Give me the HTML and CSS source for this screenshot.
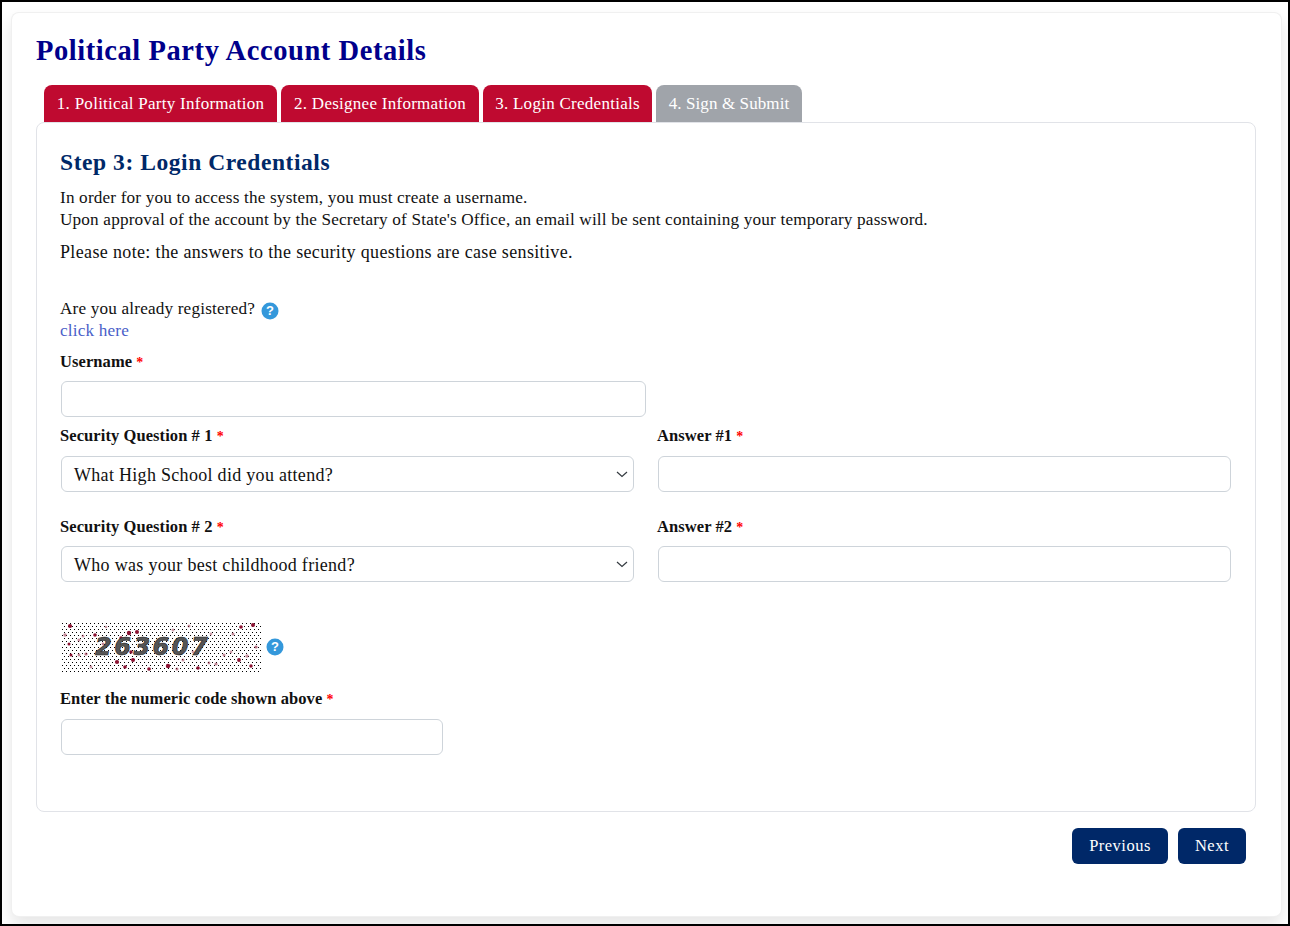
FILE: index.html
```html
<!DOCTYPE html>
<html lang="en">
<head>
<meta charset="utf-8">
<title>Political Party Account Details</title>
<link rel="stylesheet" href="styles.css">
</head>
<body>
<main class="card">
  <h1 class="page-title">Political Party Account Details</h1>
  <nav class="tabs">
    <a class="tab tab-one">1. Political Party Information</a>
    <a class="tab tab-two">2. Designee Information</a>
    <a class="tab tab-three">3. Login Credentials</a>
    <a class="tab tab-four tab-off">4. Sign &amp; Submit</a>
  </nav>
  <section class="panel">
    <h2 class="step-title">Step 3: Login Credentials</h2>
    <p class="intro">In order for you to access the system, you must create a username.<br>Upon approval of the account by the Secretary of State's Office, an email will be sent containing your temporary password.</p>
    <p class="note">Please note: the answers to the security questions are case sensitive.</p>
    <div class="registered">
      <div class="reg-line">Are you already registered?
        <svg class="help" viewBox="0 0 18 18"><circle cx="9" cy="9" r="8.5" fill="#3498db"/><text x="9" y="13.4" text-anchor="middle" class="help-mark">?</text></svg>
      </div>
      <a class="link" href="#">click here</a>
    </div>
    <label class="label label-user">Username <span class="req">*</span></label>
    <input class="field field-user" type="text">
    <div class="row row-one">
      <div class="col">
        <label class="label">Security Question # 1 <span class="req">*</span></label>
        <div class="select"><span>What High School did you attend?</span><svg class="chev" viewBox="0 0 12 7"><path d="M1 1l5 4.4L11 1" fill="none" stroke="#343a40" stroke-width="1.2"/></svg></div>
      </div>
      <div class="col">
        <label class="label">Answer #1 <span class="req">*</span></label>
        <input class="field" type="text">
      </div>
    </div>
    <div class="row row-two">
      <div class="col">
        <label class="label">Security Question # 2 <span class="req">*</span></label>
        <div class="select"><span>Who was your best childhood friend?</span><svg class="chev" viewBox="0 0 12 7"><path d="M1 1l5 4.4L11 1" fill="none" stroke="#343a40" stroke-width="1.2"/></svg></div>
      </div>
      <div class="col">
        <label class="label">Answer #2 <span class="req">*</span></label>
        <input class="field" type="text">
      </div>
    </div>
    <div class="captcha-row">
      <svg class="captcha" viewBox="0 0 200 50" width="200" height="50">
        <defs>
          <pattern id="dots" width="4" height="6" patternUnits="userSpaceOnUse">
            <rect x="1" y="1" width="1" height="1" fill="#000"/>
            <rect x="3" y="4" width="1" height="1" fill="#000"/>
          </pattern>
        </defs>
        <rect width="200" height="50" fill="#fff"/>
        <rect width="200" height="50" fill="url(#dots)"/>
        <g fill="#8a1030">
          <circle cx="9" cy="4" r="2"/><circle cx="4" cy="13" r="1.7" opacity=".5"/><circle cx="34" cy="13" r="1.8"/><circle cx="18" cy="18" r="1.6" opacity=".45"/><circle cx="22" cy="14" r="1.5" opacity=".4"/><circle cx="68" cy="11" r="2.2"/><circle cx="76" cy="10" r="2"/><circle cx="60" cy="16" r="1.7"/><circle cx="8" cy="22" r="1.5"/><circle cx="25" cy="32" r="1.6" opacity=".6"/><circle cx="10" cy="33" r="1.5"/><circle cx="18" cy="33" r="1.4" opacity=".5"/><circle cx="56" cy="40" r="2.1"/><circle cx="64" cy="45" r="1.8"/><circle cx="88" cy="47" r="1.8"/><circle cx="107" cy="44" r="2.2"/><circle cx="116" cy="47" r="1.5" opacity=".5"/><circle cx="137" cy="46" r="1.8"/><circle cx="148" cy="41" r="1.4" opacity=".5"/><circle cx="132" cy="30" r="1.4" opacity=".4"/><circle cx="180" cy="5" r="1.8"/><circle cx="192" cy="3" r="2"/><circle cx="172" cy="12" r="1.5" opacity=".5"/><circle cx="150" cy="12" r="1.4" opacity=".4"/><circle cx="178" cy="38" r="1.9"/><circle cx="186" cy="34" r="1.7" opacity=".45"/><circle cx="195" cy="25" r="1.6" opacity=".6"/><circle cx="190" cy="44" r="1.7"/><circle cx="42" cy="22" r="1.4" opacity=".5"/><circle cx="128" cy="4" r="1.5" opacity=".45"/><circle cx="163" cy="33" r="1.5" opacity=".5"/><circle cx="70" cy="30" r="1.7"/><circle cx="72" cy="38" r="2"/><circle cx="30" cy="45" r="1.4" opacity=".45"/><circle cx="112" cy="8" r="1.5" opacity=".4"/><circle cx="45" cy="5" r="1.3" opacity=".4"/><circle cx="155" cy="42" r="1.6" opacity=".5"/><circle cx="170" cy="30" r="1.4" opacity=".4"/><circle cx="122" cy="38" r="1.5" opacity=".45"/>
        </g>
        <text x="34" y="33" class="captcha-code">263607</text>
      </svg>
      <svg class="help help-captcha" viewBox="0 0 18 18"><circle cx="9" cy="9" r="8.5" fill="#3498db"/><text x="9" y="13.4" text-anchor="middle" class="help-mark">?</text></svg>
    </div>
    <label class="label label-code">Enter the numeric code shown above <span class="req">*</span></label>
    <input class="field field-code" type="text">
  </section>
  <div class="actions">
    <button class="btn btn-prev" type="button">Previous</button>
    <button class="btn btn-next" type="button">Next</button>
  </div>
</main>
</body>
</html>
```
FILE: styles.css
```css
* { box-sizing: border-box; }
html, body { margin: 0; height: 100%; }
body {
  border: 2px solid #000;
  background: #fff;
  padding: 10px 6px 7px 9px;
  height: 926px;
  overflow: hidden;
  font-family: "Liberation Serif", "Times New Roman", serif;
  font-size: 17.2px;
  letter-spacing: .17px;
  color: #111;
}
.card {
  background: #fff;
  border: 1px solid rgba(0, 0, 0, .06);
  border-radius: 8px;
  height: 905px;
  padding: 0 25px 0 24px;
  box-shadow: 0 8px 16px rgba(0, 0, 0, .1);
}
.page-title {
  margin: 21px 0 0;
  font-size: 28.5px;
  line-height: 34px;
  font-weight: 700;
  letter-spacing: .57px;
  color: #00008b;
}
.tabs { display: flex; gap: 4px; margin: 17px 0 0 8px; height: 37px; }
.tab {
  display: flex;
  align-items: center;
  justify-content: center;
  height: 37px;
  background: #bf0a30;
  color: #fff;
  border-radius: 8px 8px 0 0;
  font-size: 17px;
  letter-spacing: .27px;
}
.tab-one { width: 233px; }
.tab-two { width: 198px; }
.tab-three { width: 169px; }
.tab-four { width: 146px; letter-spacing: .1px; }
.tab-off { background: #a0a4aa; }
.panel {
  height: 690px;
  border: 1px solid #e1e3e8;
  border-radius: 8px;
  padding: 0 24px 0 23px;
}
.step-title {
  margin: 25px 0 0;
  font-size: 23.5px;
  line-height: 28px;
  font-weight: 700;
  letter-spacing: .56px;
  color: #002868;
}
.intro { margin: 11px 0 0; line-height: 22px; }
.note { margin: 10px 0 0; line-height: 22px; font-size: 18px; letter-spacing: .35px; }
.registered { margin-top: 35px; line-height: 22px; }
.reg-line { display: flex; align-items: center; gap: 6px; height: 22px; }
.help { width: 18px; height: 18px; flex: none; margin-top: 3px; }
.help-mark { font-family: "Liberation Sans", Arial, sans-serif; font-size: 13px; font-weight: 700; fill: #fff; letter-spacing: 0; }
.link { color: #4a5fc9; text-decoration: none; }
.label { display: block; font-size: 16.5px; letter-spacing: .08px; font-weight: 700; line-height: 20px; color: #111; }
.label-user { margin-top: 10px; }
.req { color: #f00; font-size: 14px; }
.field {
  display: block;
  width: 573px;
  height: 36px;
  border: 1px solid #ced4da;
  border-radius: 6px;
  background: #fff;
  padding: 0 12px;
  margin: 8px 0 0 1px;
}
.field-user { width: 585px; }
.row { display: flex; gap: 23px; }
.col { width: 574px; }
.row-one { margin-top: 9px; }
.row-two { margin-top: 25px; }
.row-one .field, .row-one .select { margin-top: 9px; }
.row-two .field, .row-two .select { margin-top: 8px; }
.select {
  display: flex;
  align-items: center;
  justify-content: space-between;
  width: 573px;
  height: 36px;
  margin-left: 1px;
  padding: 2px 5px 0 12px;
  border: 1px solid #ced4da;
  border-radius: 6px;
  background: #fff;
  font-size: 18px;
  letter-spacing: .3px;
}
.chev { width: 12px; height: 7px; margin-top: -2px; }
.captcha-row { display: flex; align-items: center; gap: 5px; margin: 40px 0 0 1px; }
.captcha { display: block; flex: none; }
.help-captcha { margin-top: 0; }
.captcha-code {
  font-family: "DejaVu Sans", sans-serif;
  font-size: 24px;
  font-weight: 700;
  font-style: italic;
  letter-spacing: 2.5px;
  fill: #555;
  stroke: #222;
  stroke-width: .6;
}
.label-code { margin-top: 17px; }
.field-code { width: 382px; margin-top: 9px; }
.actions { display: flex; justify-content: flex-end; gap: 10px; margin: 16px 10px 0 0; }
.btn {
  height: 36px;
  border: 0;
  border-radius: 6px;
  background: #002868;
  color: #fff;
  font: 400 16.5px "Liberation Serif", "Times New Roman", serif;
  letter-spacing: .5px;
}
.btn-prev { width: 96px; }
.btn-next { width: 68px; }
```
